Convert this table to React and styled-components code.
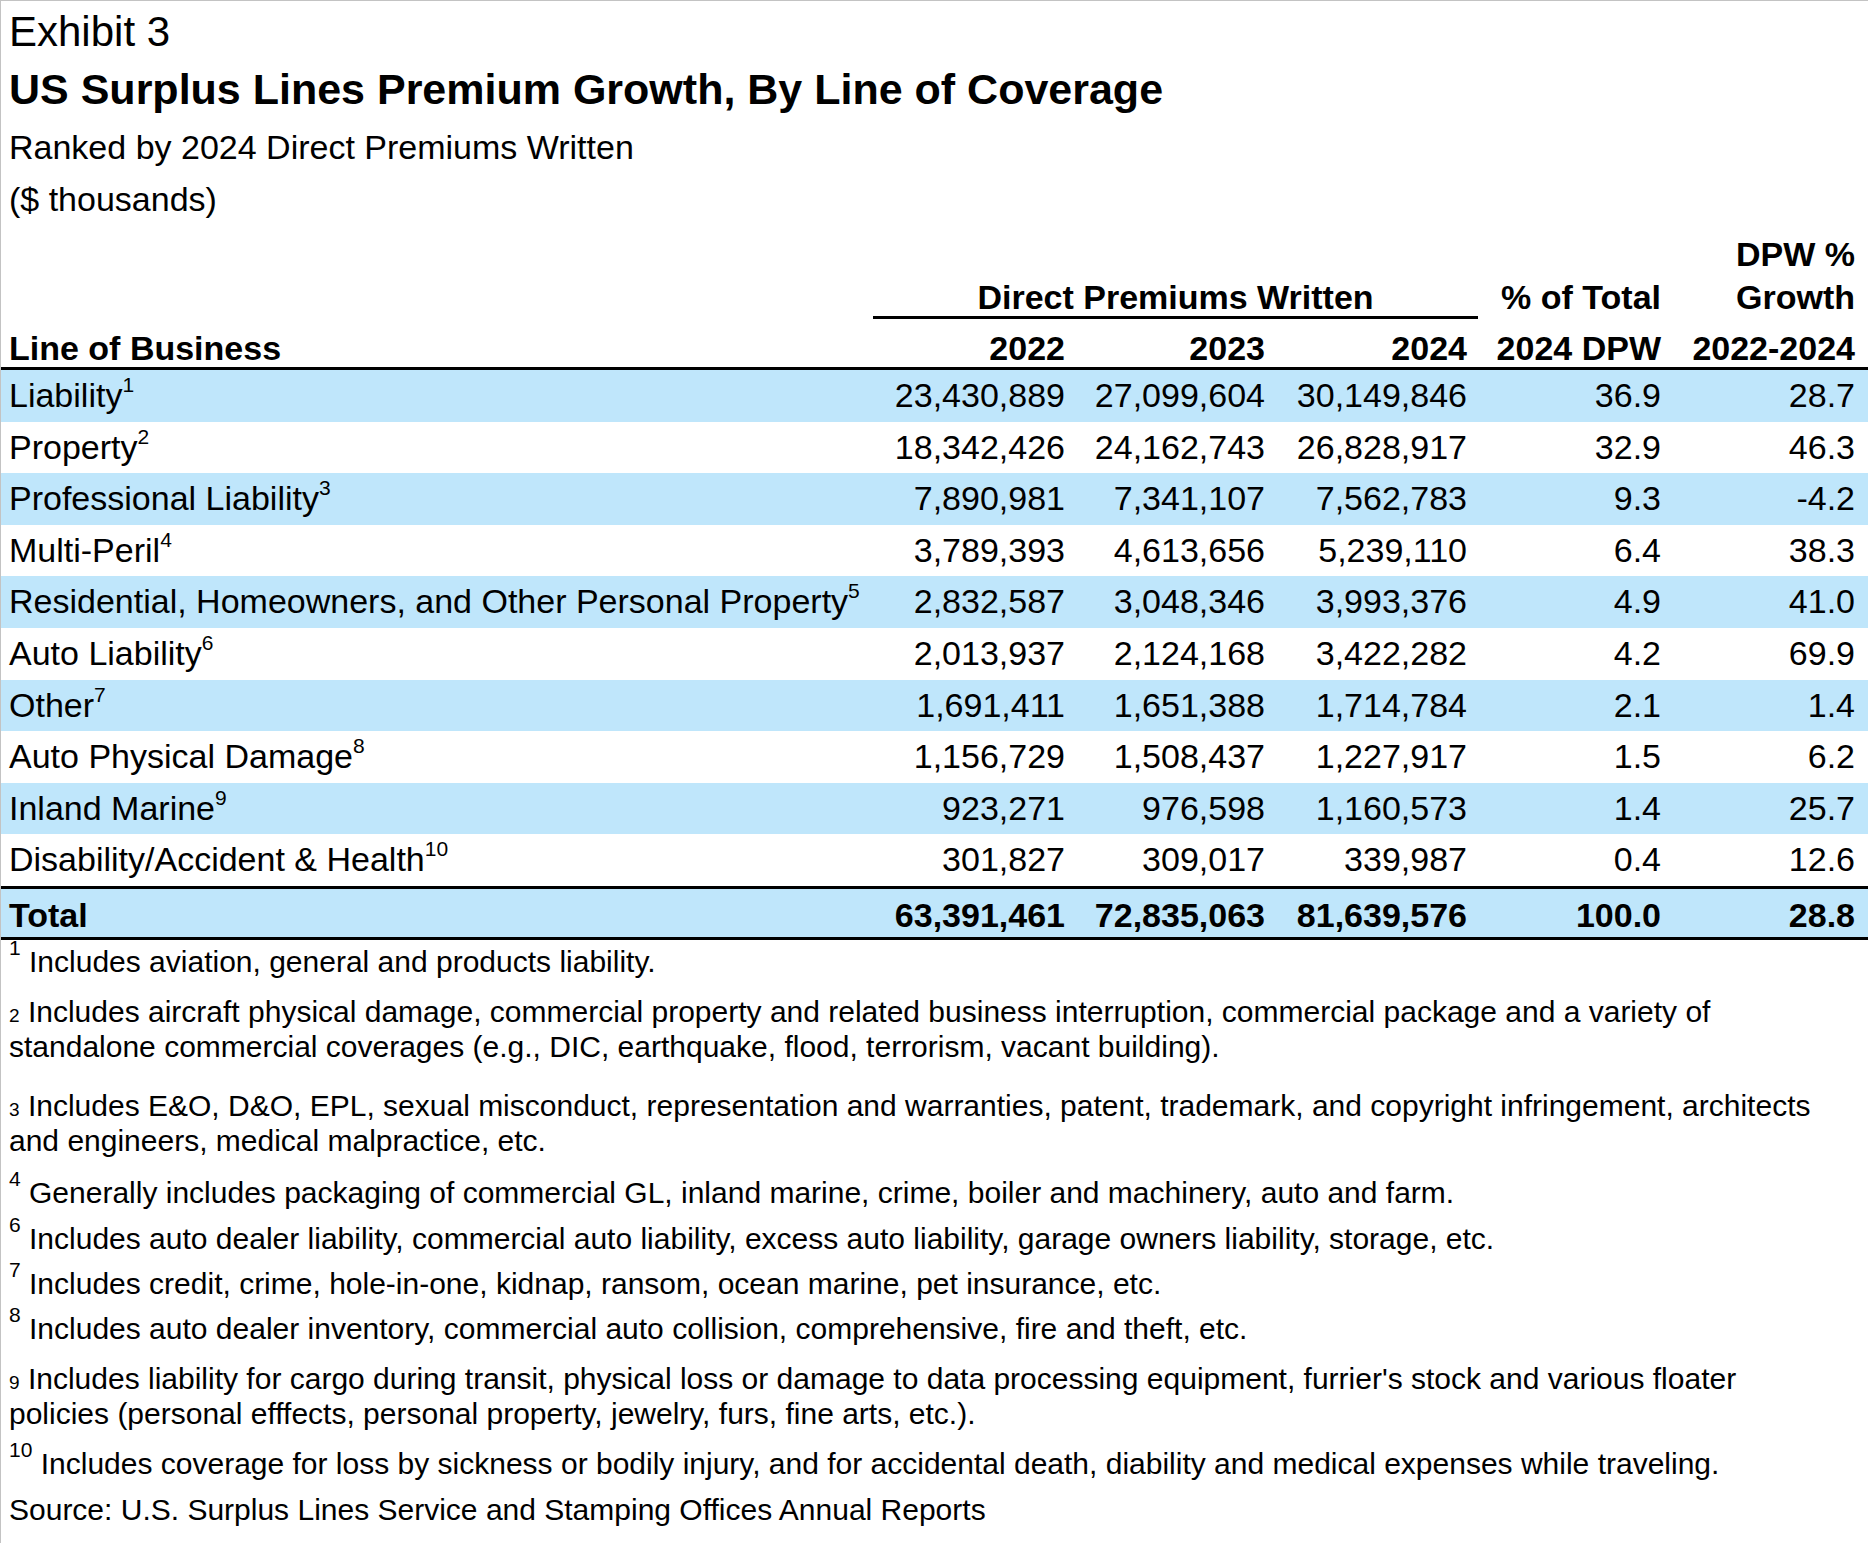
import React from 'react'
import styled, { createGlobalStyle } from 'styled-components'

const GlobalStyle = createGlobalStyle`
html, body {
    margin : 0;
    padding : 0;
    background : #ffffff;
    overflow : hidden;
}
* {
    box-sizing : border-box;
}
`

const Page = styled.div`
min-height : 100vh;
border-top : 1px solid #c3c3c3;
border-left : 1px solid #c3c3c3;
color : #000000;
font-family : "Liberation Sans", Arial, sans-serif;
`

const Heading = styled.div`
padding-left : 8px;
`

const Exhibit = styled.div`
font-size : 42px;
line-height : 52px;
padding-top : 5px;
`

const Title = styled.div`
font-size : 43px;
font-weight : bold;
line-height : 62px;
`

const Sub = styled.div`
font-size : 34px;
line-height : ${p => p.$lh}px;
`

const Table = styled.div`
margin-top : 9px;
font-size : 34px;
`

const Row = styled.div`
display : grid;
grid-template-columns : 864px 200px 200px 202px 194px 194px 1fr;
padding-left : 8px;
background : ${p => (p.$shaded ? '#bfe6fb' : 'transparent')};
`

const HeadRow = styled(Row)`
height : ${p => p.$h}px;
line-height : ${p => p.$lh}px;
font-weight : bold;
align-items : end;
border-bottom : ${p => (p.$rule ? '3px solid #000' : 'none')};
`

const DataRow = styled(Row)`
height : 51.6px;
line-height : 51.6px;
white-space : nowrap;
`

const TotalRow = styled(Row)`
height : 54px;
padding-top : 3px;
line-height : 46px;
font-weight : bold;
border-top : 3px solid #000;
border-bottom : 3px solid #000;
`

const Cell = styled.div`
text-align : ${p => (p.$left ? 'left' : 'right')};
padding-right : ${p => (p.$left ? '0' : '8px')};
`

const Group = styled.div`
grid-column : 2 / span 3;
text-align : center;
height : 43px;
padding-top : 2px;
line-height : 38px;
margin-right : -3px;
border-bottom : 3px solid #000;
`

const Sup = styled.sup`
font-size : 21px;
line-height : 0;
vertical-align : 15px;
`

const Notes = styled.div`
padding-left : 8px;
font-size : 30px;
line-height : 35px;
`

const Note = styled.div`
margin-top : ${p => p.$gap}px;
white-space : nowrap;
`

const Marker = styled.span`
font-size : ${p => (p.$sup ? '21px' : '19px')};
line-height : 0;
vertical-align : ${p => (p.$sup ? '17px' : 'baseline')};
`

const rows = [
    ['Liability', '1', '23,430,889', '27,099,604', '30,149,846', '36.9', '28.7'],
    ['Property', '2', '18,342,426', '24,162,743', '26,828,917', '32.9', '46.3'],
    ['Professional Liability', '3', '7,890,981', '7,341,107', '7,562,783', '9.3', '-4.2'],
    ['Multi-Peril', '4', '3,789,393', '4,613,656', '5,239,110', '6.4', '38.3'],
    ['Residential, Homeowners, and Other Personal Property', '5', '2,832,587', '3,048,346', '3,993,376', '4.9', '41.0'],
    ['Auto Liability', '6', '2,013,937', '2,124,168', '3,422,282', '4.2', '69.9'],
    ['Other', '7', '1,691,411', '1,651,388', '1,714,784', '2.1', '1.4'],
    ['Auto Physical Damage', '8', '1,156,729', '1,508,437', '1,227,917', '1.5', '6.2'],
    ['Inland Marine', '9', '923,271', '976,598', '1,160,573', '1.4', '25.7'],
    ['Disability/Accident & Health', '10', '301,827', '309,017', '339,987', '0.4', '12.6'],
]

const notes = [
    { n: '1', sup: true, gap: 4, lines: ['Includes aviation, general and products liability.'] },
    { n: '2', sup: false, gap: 15, lines: ['Includes aircraft physical damage, commercial property and related business interruption, commercial package and a variety of', 'standalone commercial coverages (e.g., DIC, earthquake, flood, terrorism, vacant building).'] },
    { n: '3', sup: false, gap: 24, lines: ['Includes E&O, D&O, EPL, sexual misconduct, representation and warranties, patent, trademark, and copyright infringement, architects', 'and engineers, medical malpractice, etc.'] },
    { n: '4', sup: true, gap: 17, lines: ['Generally includes packaging of commercial GL, inland marine, crime, boiler and machinery, auto and farm.'] },
    { n: '6', sup: true, gap: 11, lines: ['Includes auto dealer liability, commercial auto liability, excess auto liability, garage owners liability, storage, etc.'] },
    { n: '7', sup: true, gap: 10, lines: ['Includes credit, crime, hole-in-one, kidnap, ransom, ocean marine, pet insurance, etc.'] },
    { n: '8', sup: true, gap: 10, lines: ['Includes auto dealer inventory, commercial auto collision, comprehensive, fire and theft, etc.'] },
    { n: '9', sup: false, gap: 15, lines: ["Includes liability for cargo during transit, physical loss or damage to data processing equipment, furrier's stock and various floater", 'policies (personal efffects, personal property, jewelry, furs, fine arts, etc.).'] },
    { n: '10', sup: true, gap: 15, lines: ['Includes coverage for loss by sickness or bodily injury, and for accidental death, diability and medical expenses while traveling.'] },
]

const App = () => {
    return (
        <Page>
            <GlobalStyle />
            <Heading>
                <Exhibit>Exhibit 3</Exhibit>
                <Title>US Surplus Lines Premium Growth, By Line of Coverage</Title>
                <Sub $lh={54}>Ranked by 2024 Direct Premiums Written</Sub>
                <Sub $lh={50}>($ thousands)</Sub>
            </Heading>

            <Table>
                <HeadRow $h={43} $lh={43}>
                    <Cell $left />
                    <Cell />
                    <Cell />
                    <Cell />
                    <Cell />
                    <Cell>DPW %</Cell>
                </HeadRow>
                <HeadRow $h={43} $lh={43}>
                    <Cell $left />
                    <Group>Direct Premiums Written</Group>
                    <Cell>% of Total</Cell>
                    <Cell>Growth</Cell>
                </HeadRow>
                <HeadRow $h={51} $lh={38} $rule>
                    <Cell $left>Line of Business</Cell>
                    <Cell>2022</Cell>
                    <Cell>2023</Cell>
                    <Cell>2024</Cell>
                    <Cell>2024 DPW</Cell>
                    <Cell>2022-2024</Cell>
                </HeadRow>

                {rows.map((r, i) => (
                    <DataRow key={r[0]} $shaded={i % 2 === 0}>
                        <Cell $left>{r[0]}<Sup>{r[1]}</Sup></Cell>
                        <Cell>{r[2]}</Cell>
                        <Cell>{r[3]}</Cell>
                        <Cell>{r[4]}</Cell>
                        <Cell>{r[5]}</Cell>
                        <Cell>{r[6]}</Cell>
                    </DataRow>
                ))}

                <TotalRow $shaded>
                    <Cell $left>Total</Cell>
                    <Cell>63,391,461</Cell>
                    <Cell>72,835,063</Cell>
                    <Cell>81,639,576</Cell>
                    <Cell>100.0</Cell>
                    <Cell>28.8</Cell>
                </TotalRow>
            </Table>

            <Notes>
                {notes.map(f => (
                    <Note key={f.n} $gap={f.gap}>
                        <Marker $sup={f.sup}>{f.n}</Marker> {f.lines[0]}
                        {f.lines[1] && <><br />{f.lines[1]}</>}
                    </Note>
                ))}
                <Note $gap={11}>Source: U.S. Surplus Lines Service and Stamping Offices Annual Reports</Note>
            </Notes>
        </Page>
    )
}

export default App
